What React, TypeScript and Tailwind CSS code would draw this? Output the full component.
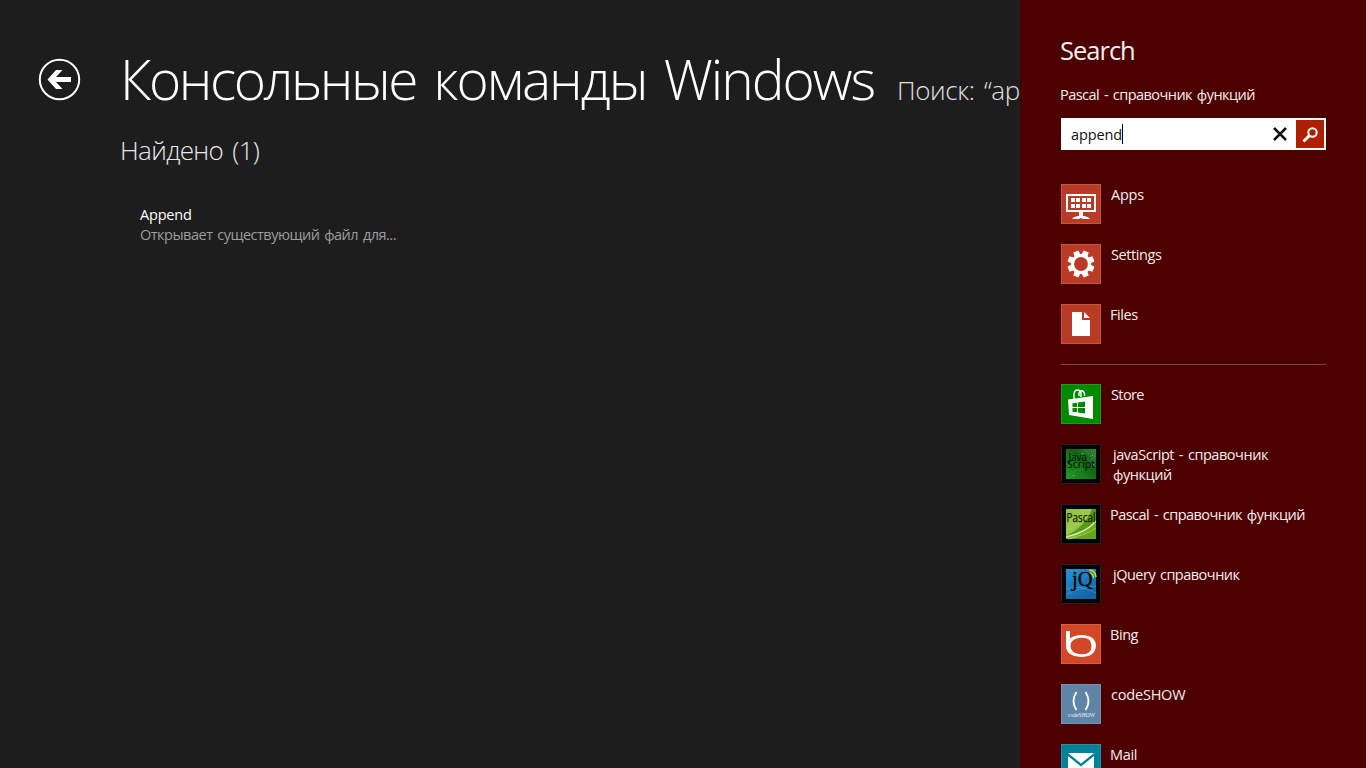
import type { ReactNode } from "react";

function Tile({ className, children }: { className: string; children: ReactNode }) {
  return (
    <svg viewBox="0 0 40 40" className={`h-10 w-10 shrink-0 ${className}`}>
      {children}
      <rect x="0.5" y="0.5" width="39" height="39" fill="none" stroke="#ffffff" strokeOpacity="0.13" />
    </svg>
  );
}

function AppsIcon() {
  return (
    <Tile className="bg-[#ba3b25]">
      <rect x="6" y="11" width="28" height="16" fill="none" stroke="#fff" strokeWidth="2" />
      <g fill="#fff">
        {[14, 20].map((y) => [10, 15, 21, 26].map((x) => <rect key={`${x}-${y}`} x={x} y={y} width="4" height="4" />))}
        <path d="M18 28h4v4q5 .3 7 3h-7l-2-1-2 1h-7q2-2.700 7-3z" />
      </g>
    </Tile>
  );
}

function SettingsIcon() {
  return (
    <Tile className="bg-[#ba3b25]">
      <circle cx="20" cy="20" r="8.500" fill="none" stroke="#fff" strokeWidth="3.200" />
      {[22.5, 67.5, 112.5, 157.5, 202.5, 247.5, 292.5, 337.5].map((a) => (
        <path key={a} d="M16.800 11.500 17.300 6.500h5.400l.5 5z" fill="#fff" transform={`rotate(${a} 20 20)`} />
      ))}
    </Tile>
  );
}

function FilesIcon() {
  return (
    <Tile className="bg-[#ba3b25]">
      <path d="M11 8h10v8h8v16H11zM23 8l6 6h-6z" fill="#fff" />
    </Tile>
  );
}

function StoreIcon() {
  return (
    <Tile className="bg-[#008a00]">
      <path d="M13 15v-5q.5-4 3.500-4T20 9v4M18 12V9q1-3 3.500-2t2 5" fill="none" stroke="#fff" strokeWidth="1.400" />
      <path d="M7 15.500 32 12v23L8 31z" fill="#fff" />
      <path d="M11.500 19.300 16 18.700V23h-4.500zM17 18.500l7-1V23h-7zM11.500 24H16v4.300l-4.500-.6zM17 24h7v5.400l-7-1z" fill="#008a00" />
    </Tile>
  );
}

function JavaScriptIcon() {
  return (
    <Tile className="bg-black">
      <defs>
        <linearGradient id="js-bg" x1="0" y1="1" x2="1" y2="0">
          <stop offset="0" stopColor="#1d9a22" />
          <stop offset="0.35" stopColor="#178019" />
          <stop offset="0.6" stopColor="#126416" />
          <stop offset="1" stopColor="#2f8a36" />
        </linearGradient>
      </defs>
      <rect x="5" y="5" width="30" height="30" fill="url(#js-bg)" />
      <path d="M5 27q8-8 17-8T35 9M22 5q9 6 11 14M6 35q5-9 16-10" fill="none" stroke="#55ae55" strokeWidth="0.700" opacity="0.400" />
      <path d="M21 9h1v1h-1zM31 11h1v1h-1zM32 20h1v1h-1zM12 31h1v1h-1z" fill="#85cb85" />
      <g fill="#020a02" fontFamily="Open Sans">
        <text x="7.500" y="17" fontSize="11.500" textLength="18.500" lengthAdjust="spacingAndGlyphs">Java</text>
        <text x="6" y="24" fontSize="10.500" textLength="28" lengthAdjust="spacingAndGlyphs">Script</text>
      </g>
    </Tile>
  );
}

function PascalIcon() {
  return (
    <Tile className="bg-black">
      <defs>
        <linearGradient id="pas-bg" x1="0" y1="0" x2="0.8" y2="1">
          <stop offset="0" stopColor="#8fc23a" />
          <stop offset="0.5" stopColor="#9ccc50" />
          <stop offset="1" stopColor="#4f9410" />
        </linearGradient>
      </defs>
      <rect x="5" y="5" width="30" height="30" fill="url(#pas-bg)" />
      <path d="M35 20Q26 31 8 35h27z" fill="#66a61c" />
      <path d="M35 5v12Q24 28 5 32 24 23 31 5z" fill="#58991a" />
      <path d="M5 33Q26 28 35 17" fill="none" stroke="#d5eda5" strokeWidth="1.200" />
      <path d="M7 35q18-4 28-11" fill="none" stroke="#a9d765" strokeWidth="0.800" />
      <text x="5.500" y="18" fill="#10180a" stroke="#10180a" strokeWidth="0.250" fontFamily="Open Sans" fontSize="12.500" textLength="29" lengthAdjust="spacingAndGlyphs">Pascal</text>
    </Tile>
  );
}

function JQueryIcon() {
  return (
    <Tile className="bg-black">
      <defs>
        <linearGradient id="jq-bg" x1="0" y1="0" x2="0.5" y2="1">
          <stop offset="0" stopColor="#2a92d4" />
          <stop offset="1" stopColor="#1267a6" />
        </linearGradient>
      </defs>
      <rect x="5" y="5" width="30" height="30" fill="url(#jq-bg)" />
      <path d="M5 25q13-5 30 4M5 31q12-7 30-9" fill="none" stroke="#55b0e0" strokeWidth="0.800" opacity="0.600" />
      <g fill="none" stroke="#d4df22" strokeWidth="1.500">
        <path d="M28 6q6 0 7 7M28 9q4 0 4.500 5" />
      </g>
      <text x="11" y="22" fill="#05090c" stroke="#05090c" strokeWidth="0.400" fontFamily="Liberation Serif" fontSize="20" textLength="20.500" lengthAdjust="spacingAndGlyphs">jQ</text>
    </Tile>
  );
}

function BingIcon() {
  return (
    <Tile className="bg-[#d24726]">
      <path d="M5 7h4v7.500Q13 11 20.500 11 35 11.500 35 22 34 33 20 33 5 32 5 22zM20 13.700Q9.500 14.500 9.500 22T20 30.300 30.500 22 20 13.700z" fill="#fff" fillRule="evenodd" />
    </Tile>
  );
}

function CodeShowIcon() {
  return (
    <Tile className="bg-[#5f84a6]">
      <path d="M15.500 8Q9.500 17 15.500 26M24.500 8Q30.500 17 24.500 26" fill="none" stroke="#fff" strokeWidth="1.800" />
      <text x="7" y="33" fill="#f2f6fa" fontFamily="Liberation Serif" fontSize="7" textLength="27" lengthAdjust="spacingAndGlyphs">codeSHOW</text>
    </Tile>
  );
}

function MailIcon() {
  return (
    <Tile className="bg-[#008299]">
      <path d="M7 9h26L20 19.500z" fill="#fff" />
      <path d="M7 12l13 10.500L33 12v18H7z" fill="#fff" />
    </Tile>
  );
}

type Target = { name: string; icon: ReactNode; label: string };

const systemTargets: Target[] = [
  { name: "Apps", icon: <AppsIcon />, label: "pl-[10px] tracking-[-0.25px]" },
  { name: "Settings", icon: <SettingsIcon />, label: "pl-[10px] tracking-[-0.4px]" },
  { name: "Files", icon: <FilesIcon />, label: "pl-[9px] tracking-[-0.45px]" },
];

const appTargets: Target[] = [
  { name: "Store", icon: <StoreIcon />, label: "pl-[10px] tracking-[-0.6px]" },
  { name: "javaScript - справочник функций", icon: <JavaScriptIcon />, label: "w-[190px] pl-3 tracking-[-0.45px]" },
  { name: "Pascal - справочник функций", icon: <PascalIcon />, label: "pl-[9px] tracking-[-0.53px]" },
  { name: "jQuery справочник", icon: <JQueryIcon />, label: "pl-3 tracking-[-0.5px]" },
  { name: "Bing", icon: <BingIcon />, label: "pl-[9px] tracking-[-0.45px]" },
  { name: "codeSHOW", icon: <CodeShowIcon />, label: "pl-[10px] tracking-[-0.2px]" },
  { name: "Mail", icon: <MailIcon />, label: "pl-[9px] tracking-[-0.35px]" },
];

function TargetList({ items }: { items: Target[] }) {
  return (
    <ul className="flex flex-col gap-5">
      {items.map((t) => (
        <li key={t.name} className="flex h-10">
          {t.icon}
          <span className={`pt-px text-[14.5px] leading-5 [word-spacing:1.5px] ${t.label}`}>{t.name}</span>
        </li>
      ))}
    </ul>
  );
}

export default function App() {
  return (
    <div className="flex h-screen w-full overflow-hidden bg-[#1d1d1d] font-['Open_Sans',sans-serif] text-white">
      <main className="flex w-[1020px] shrink-0 overflow-hidden pl-[38px]">
        <button className="mt-[58px] h-[43px] w-[43px] shrink-0">
          <svg viewBox="0 0 43 43" className="h-full w-full">
            <circle cx="21.500" cy="21.500" r="19.700" fill="none" stroke="#fff" strokeWidth="2" />
            <path d="M9.500 21.500 18 12h6.500l-6.500 7h15v5H18l6.500 7H18z" fill="#fff" />
          </svg>
        </button>
        <div className="ml-[39px] whitespace-nowrap font-light">
          <header className="mt-[39px] flex h-20 items-baseline leading-[80px]">
            <h1 className="text-[55px] tracking-[-2px] [word-spacing:5px]">
              <span className="tracking-[-2.45px]">Консольные</span> команды Windows
            </h1>
            <span className="ml-[23px] text-[26px] tracking-[-0.4px] text-[#e0e0e0] [word-spacing:3px]">Поиск: “append”</span>
          </header>
          <h2 className="mt-[11px] text-[26px] leading-10 tracking-[-0.65px] text-[#e8e8e8] [word-spacing:3px]">Найдено (1)</h2>
          <div className="mt-[35px] pl-5 font-normal leading-5">
            <p className="text-[14.5px] tracking-[-0.2px]">Append</p>
            <p className="text-[14.5px] tracking-[-0.5px] text-[#9d9d9d] [word-spacing:1.5px]">Открывает существующий файл для...</p>
          </div>
        </div>
      </main>
      <aside className="flex grow flex-col overflow-hidden border-l border-[#3c0404] bg-[#4c0000] pl-10 pr-10 text-[#f6eeee]">
        <h2 className="-ml-px mt-[30px] text-[25.5px] leading-10 font-normal tracking-[-1px]">Search</h2>
        <p className="-ml-px mt-[15px] whitespace-nowrap text-[14.5px] leading-5 tracking-[-0.53px] [word-spacing:1.5px]">Pascal - справочник функций</p>
        <div className="mt-[13px] flex h-8 shrink-0 items-center bg-white">
          <span className="pl-[10px] pt-px text-[14.5px] leading-5 tracking-[-0.1px] text-[#111]">append</span>
          <span className="h-5 w-px bg-black" />
          <svg viewBox="0 0 16 16" className="ml-auto h-4 w-4">
            <path d="m2 2 12 12m0-12-12 12" fill="none" stroke="#111118" strokeWidth="2.500" />
          </svg>
          <button className="ml-2 mr-[2px] h-7 w-7 bg-[#b01e00]">
            <svg viewBox="0 0 28 28" className="h-7 w-7">
              <circle cx="16.500" cy="12.500" r="4.200" fill="none" stroke="#fff" strokeWidth="2" />
              <path d="m13.500 15.500-6 6" stroke="#fff" strokeWidth="2.800" />
            </svg>
          </button>
        </div>
        <div className="mt-[34px] flex flex-col">
          <TargetList items={systemTargets} />
          <div className="my-[20px] -mb-px h-px bg-[#7b4545]" />
          <div className="mt-5">
            <TargetList items={appTargets} />
          </div>
        </div>
      </aside>
    </div>
  );
}
